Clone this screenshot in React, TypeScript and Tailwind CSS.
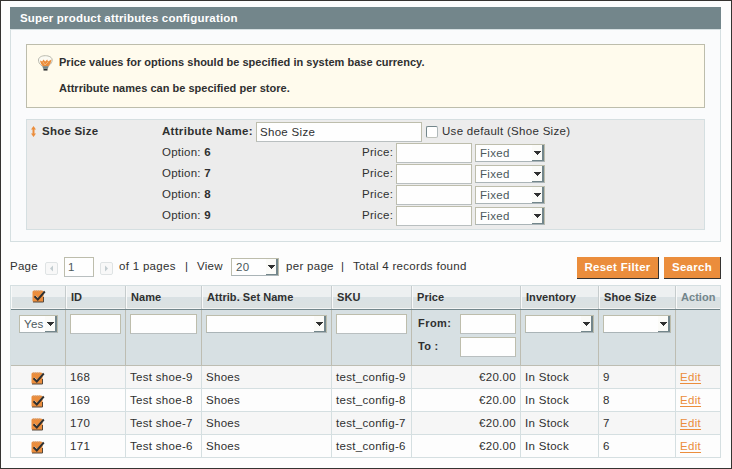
import type { ReactNode } from 'react';

const COLS = 'grid grid-cols-[55px_60px_76px_130px_80px_109px_78px_77px_45px]';

function Field({ className = '', children }: { className?: string; children?: ReactNode }) {
  return (
    <div className={`flex h-5 shrink-0 items-center border border-[#bdbdac] border-b-[#b9bfc0] bg-[#fefefe] pl-[3px] ${className}`}>
      {children}
    </div>
  );
}

function Select({ className = '', children }: { className?: string; children?: ReactNode }) {
  return (
    <div className={`flex h-[18px] shrink-0 items-center justify-between border border-[#bdbdac] border-b-[#aab4b7] bg-[#fefefe] pl-1 text-[#4c595c] ${className}`}>
      <span>{children}</span>
      <span className="flex h-4 w-3 items-center justify-center border-r-2 border-b border-[#73868b] bg-[#fbfbf8] pt-px">
        <svg width="7" height="4" viewBox="0 0 7 4" shapeRendering="crispEdges">
          <path d="M0 0h7v1H6v1H5v1H4v1H3V3H2V2H1V1H0z" fill="#2f3030" />
        </svg>
      </span>
    </div>
  );
}

function Check() {
  return (
    <svg width="14" height="13" viewBox="0 0 14 13">
      <rect x="0.5" y="0.5" width="11" height="11.5" rx="1.5" fill="#eb8d3c" />
      <path d="M1 12h10.500V7" fill="none" stroke="#54473b" strokeWidth="1" />
      <path d="M2 1h8" stroke="#c5a184" strokeDasharray="1 1" />
      <path d="M3.500 5.500l2.500 3L12 1.500" fill="none" stroke="#f9dfc0" strokeWidth="1" />
      <path d="M2.500 6.300l3.300 3.200L12.800 1.500" fill="none" stroke="#2f3030" strokeWidth="1.900" />
    </svg>
  );
}

function Bulb() {
  return (
    <svg width="15" height="16" viewBox="0 0 15 16">
      <path d="M4 11C1 8.5.5 7 .5 5 .5 2.3 3.5.7 7.3.7S14.2 2.3 14.2 5c0 2-.8 3.5-3.7 6z" fill="#fbfaf3" stroke="#b8b9ae" />
      <path d="M2 5.500l2.200 1 1.200-2 1.800 2 2-2 .8 2 3.500-2c-.2 3-1.600 5-3.300 7H5C3.300 9.500 2.500 8 2 5.500z" fill="#eb8d3c" />
      <path d="M5 7l2 3 3-3" fill="none" stroke="#f7d3ac" strokeWidth=".6" />
      <path d="M4.500 11.800h6M5 13.200h5" stroke="#73868b" strokeWidth="1.300" />
      <path d="M5.500 14.700h4" stroke="#2f3030" strokeWidth="1.700" />
    </svg>
  );
}

function PageArrow({ right = false }: { right?: boolean }) {
  return (
    <svg width="13" height="13" viewBox="0 0 13 13" className="shrink-0">
      <rect x=".5" y=".5" width="12" height="12" rx="1.500" fill="#f8f8f8" stroke="#dfe3e4" />
      <path d={right ? 'M5 3.500v6l3-3z' : 'M8 3.500v6l-3-3z'} fill="#c2ccd0" />
    </svg>
  );
}

function HeadCell({ children, className = '' }: { children: ReactNode; className?: string }) {
  return (
    <div className={`flex items-center border-r border-[#c6cccd] pb-0.5 pl-[5px] shadow-[inset_1px_0_0_#f8f9f9] last:border-r-0 ${className}`}>{children}</div>
  );
}

function FilterCell({ children }: { children?: ReactNode }) {
  return <div className="border-r border-[#bdbdb2] pt-1 pl-1 last:border-r-0">{children}</div>;
}

function Cell({ children, className = '' }: { children: ReactNode; className?: string }) {
  return <div className={`flex items-center border-r border-[#d5dfe1] pl-1 last:border-r-0 ${className}`}>{children}</div>;
}

const records = [
  { id: 168, size: 9 },
  { id: 169, size: 8 },
  { id: 170, size: 7 },
  { id: 171, size: 6 },
];

export default function App() {
  return (
    <div className="h-[469px] w-[732px] overflow-hidden border border-[#353331] bg-[#fdfdfd] px-[9px] pt-1.5 font-['Liberation_Sans',Arial,sans-serif] text-[11.5px] leading-[14px] tracking-[0.3px] whitespace-nowrap text-[#2f3030]">
      <section className="w-[711px]">
        <h2 className="flex h-[22px] items-center bg-[#73868b] pl-2.5 font-bold tracking-[0.18px] text-white">
          Super product attributes configuration
        </h2>
        <div className="h-[213px] border border-[#d5dfe1] bg-[#fafbfc] px-[15px] pt-3.5">
          <div className="flex h-16 w-[679px] border border-[#bdbdac] bg-[#fffbed] pt-2.5 pl-[11px]">
            <Bulb />
            <div className="pl-1.5 text-[11px] leading-[26px] font-bold tracking-[0.02px]">
              <p className="-mt-[6px]">Price values for options should be specified in system base currency.</p>
              <p>Attrribute names can be specified per store.</p>
            </div>
          </div>
          <div className="mt-[11px] h-[111px] w-[679px] border border-[#d5dfe1] bg-[#ececec] pt-0.5">
            <div className="flex h-[21px] items-start">
              <div className="flex h-[18px] w-[135px] items-center pl-1 font-bold tracking-[0.23px]">
                <svg width="5" height="11" viewBox="0 0 5 11" className="mr-1.5">
                  <path d="M2.500 0L5 3.500H3.500v4H5L2.500 11 0 7.500h1.500v-4H0z" fill="#eb8d3c" />
                </svg>
                Shoe Size
              </div>
              <div className="flex h-[18px] w-[94px] items-center font-bold">Attribute Name:</div>
              <Field className="w-[166px]">Shoe Size</Field>
              <span className="mt-1 ml-1 h-3 w-3 rounded-[2px] border border-[#73868b] border-r-[#b0b9bb] border-b-[#c0c3bc] bg-white" />
              <span className="pt-0.5 pl-1">Use default (Shoe Size)</span>
            </div>
            {[6, 7, 8, 9].map((size) => (
              <div key={size} className="flex h-[21px] items-start pl-[135px]">
                <span className="w-[200px] pt-0.5 tracking-[0.23px]">
                  Option: <b>{size}</b>
                </span>
                <span className="w-[34px] pt-0.5">Price:</span>
                <Field className="w-[76px]" />
                <Select className="mt-px ml-[3px] w-[70px]">Fixed</Select>
              </div>
            ))}
          </div>
        </div>
      </section>

      <div className="mt-[15px] flex h-[22px] w-[711px] items-center">
        <span className="-mt-[5px] w-[35px] tracking-[0.23px]">Page</span>
        <PageArrow />
        <Field className="-mt-0.5 ml-1.5 w-[30px] text-[#4c595c]">1</Field>
        <span className="mr-1.5 ml-1.5 flex"><PageArrow right /></span>
        <span className="-mt-[5px] w-[66px]">of 1 pages</span>
        <span className="-mt-[5px] w-3">|</span>
        <span className="-mt-[5px] w-[34px]">View</span>
        <Select className="-mt-0.5 w-12">20</Select>
        <span className="-mt-[5px] ml-[7px] w-[55px]">per page</span>
        <span className="-mt-[5px] w-3">|</span>
        <span className="-mt-[5px]">Total 4 records found</span>
        <button className="ml-auto h-[22px] w-[82px] border-r border-b border-[#353331] bg-[#eb8d3c] pb-0.5 font-bold text-white">Reset Filter</button>
        <button className="ml-[5px] h-[22px] w-[57px] border-r border-b border-[#353331] bg-[#eb8d3c] pb-0.5 font-bold text-white">Search</button>
      </div>

      <div className="mt-1.5 w-[711px] border-x border-t border-[#d5dfe1]">
        <div className={`${COLS} h-[24px] border-b border-[#73868b] bg-[linear-gradient(#edf0f1_0,#edf0f1_11px,#d9e1e4_11px,#dce1e1_22px,#f4f5f5_22px)] text-[11px] font-bold tracking-[0.05px]`}>
          <HeadCell className="justify-center pr-1"><Check /></HeadCell>
          <HeadCell>ID</HeadCell>
          <HeadCell>Name</HeadCell>
          <HeadCell>Attrib. Set Name</HeadCell>
          <HeadCell>SKU</HeadCell>
          <HeadCell>Price</HeadCell>
          <HeadCell>Inventory</HeadCell>
          <HeadCell>Shoe Size</HeadCell>
          <HeadCell className="text-[#73868b]">Action</HeadCell>
        </div>
        <div className={`${COLS} h-14 border-b border-[#bdbdb2] bg-[#d7e0e3]`}>
          <FilterCell><Select className="mt-px ml-1 w-[39px]">Yes</Select></FilterCell>
          <FilterCell><Field className="w-[51px]" /></FilterCell>
          <FilterCell><Field className="w-[67px]" /></FilterCell>
          <FilterCell><Select className="mt-px w-[121px]" /></FilterCell>
          <FilterCell><Field className="w-[71px]" /></FilterCell>
          <FilterCell>
            <div className="flex flex-col gap-[3px] pl-0.5 text-[11px] font-bold">
              <div className="flex"><span className="w-[42px] pt-0.5 tracking-[0.45px]">From:</span><Field className="w-14" /></div>
              <div className="flex"><span className="w-[42px] pt-0.5">To :</span><Field className="w-14" /></div>
            </div>
          </FilterCell>
          <FilterCell><Select className="mt-px w-[69px]" /></FilterCell>
          <FilterCell><Select className="mt-px w-[68px]" /></FilterCell>
          <FilterCell />
        </div>
        {records.map(({ id, size }) => (
          <div key={id} className={`${COLS} h-[23px] border-b border-[#d5dfe1] odd:bg-[#f6f6f6] even:bg-[#fdfdfd]`}>
            <Cell className="justify-center pt-0.5 pr-1"><Check /></Cell>
            <Cell>{id}</Cell>
            <Cell>Test shoe-{size}</Cell>
            <Cell>Shoes</Cell>
            <Cell>test_config-{size}</Cell>
            <Cell className="justify-end pr-1">€20.00</Cell>
            <Cell>In Stock</Cell>
            <Cell>{size}</Cell>
            <Cell className="text-[#eb8d3c]"><a className="underline decoration-1 underline-offset-2">Edit</a></Cell>
          </div>
        ))}
      </div>
    </div>
  );
}
